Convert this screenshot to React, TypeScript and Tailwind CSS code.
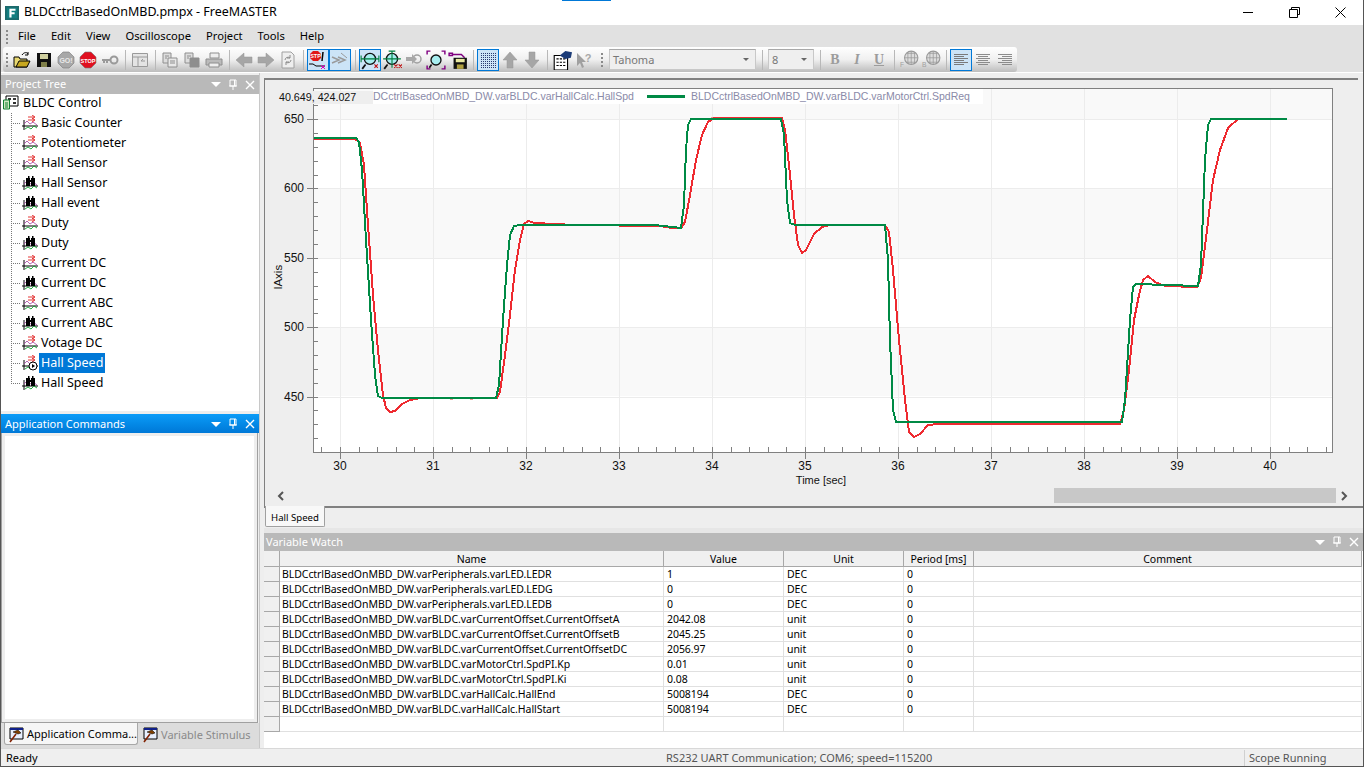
import React from "react";

const ui = "font-['Noto_Sans','Open_Sans',sans-serif]";

type IconProps = { children: React.ReactNode; size?: number };
const Ico = ({ children, size = 18 }: IconProps) => (
  <svg width={size} height={size} viewBox="0 0 18 18" className="block shrink-0">
    {children}
  </svg>
);

const Open = () => (
  <Ico>
    <path d="M1 6h5l1 2h7v8H1z" fill="#e8d870" stroke="#000" />
    <path d="M3 16l3-6h11l-3 6z" fill="#c8a820" stroke="#000" />
    <path d="M9 4c2-3 5-3 6-1M15 1v3h-3" fill="none" stroke="#000" />
  </Ico>
);
const Save = () => (
  <Ico>
    <path d="M2 2h14v14H2z" fill="#111" />
    <path d="M5 3h8v5H5z" fill="#d0d0a0" />
    <path d="M6 11h6v5H6z" fill="#80804a" />
  </Ico>
);
const Octa = ({ fill, label, color, size }: { fill: string; label: string; color: string; size: number }) => (
  <Ico>
    <path d="M6 1h6l5 5v6l-5 5H6l-5-5V6z" fill={fill} stroke="#777" strokeWidth="0.6" />
    <text x="9" y="11.5" textAnchor="middle" fontSize={size} fontWeight="700" fill={color} fontFamily="Liberation Sans">
      {label}
    </text>
  </Ico>
);
const Key = () => (
  <Ico>
    <circle cx="13" cy="9" r="3.5" fill="none" stroke="#9a9a9a" strokeWidth="2" />
    <path d="M1 9h9M3 9v3M6 9v3" stroke="#9a9a9a" strokeWidth="2" fill="none" />
  </Ico>
);
const WinIcon = () => (
  <Ico>
    <path d="M1.5 2.500h15v13h-15zM1.5 6h15M7 6v9.5" fill="#e4e4e4" stroke="#9a9a9a" />
    <path d="M10 10h4M10 10l2-2" stroke="#9a9a9a" fill="none" />
  </Ico>
);
const Copy = ({ alt }: { alt?: boolean }) => (
  <Ico>
    <path d="M2 2h8v10H2z" fill="#ddd" stroke="#8e8e8e" />
    <path d="M7 7h9v9H7z" fill={alt ? "#8e8e8e" : "#e8e8e8"} stroke="#8e8e8e" />
    <path d="M4 5h4M4 7h2M9 10h5M9 12h5" stroke="#8e8e8e" />
  </Ico>
);
const Print = () => (
  <Ico>
    <path d="M5 2h9v5H5z" fill="#eee" stroke="#8e8e8e" />
    <path d="M1 8h16v6H1z" fill="#bbb" stroke="#8e8e8e" />
    <path d="M4 12h10v4H4z" fill="#eee" stroke="#8e8e8e" />
  </Ico>
);
const Arrow = ({ dir }: { dir: "l" | "r" | "u" | "d" }) => {
  const rot = { l: 180, r: 0, u: 270, d: 90 }[dir];
  return (
    <Ico>
      <g transform={`rotate(${rot} 9 9)`}>
        <path d="M1 6h8V2l8 7-8 7v-4H1z" fill="#a6a6a6" stroke="#949494" strokeWidth="0.5" />
      </g>
    </Ico>
  );
};
const Refresh = () => (
  <Ico>
    <path d="M3 1h9l3 3v13H3z" fill="#eee" stroke="#a0a0a0" />
    <path d="M6 9a3 3 0 0 1 5-2M12 9a3 3 0 0 1-5 2M11 4v3H8M7 14v-3h3" fill="none" stroke="#8a8a8a" />
  </Ico>
);
const StpTrig = () => (
  <svg width="20" height="20" viewBox="0 0 20 20" className="block">
    <path d="M5 1h5l3 3v4l-3 3H5L2 8V4z" fill="#e01818" />
    <text x="7.5" y="8" textAnchor="middle" fontSize="5.5" fontWeight="700" fill="#fff" fontFamily="Liberation Sans">
      STP
    </text>
    <path d="M1 14h4l3 2h9" fill="none" stroke="#000" />
    <path d="M15 2l-1 9" stroke="#000" strokeWidth="1.5" />
    <path d="M13 15l4 4M17 15l-4 4" stroke="#e000c0" />
  </svg>
);
const Faded = () => (
  <Ico>
    <path d="M1 6l7 3-7 3M7 6l7 3-7 3" fill="none" stroke="#9a9a9a" strokeWidth="1.5" />
    <path d="M10 2l6 5" stroke="#9a9a9a" />
  </Ico>
);
const Lens = ({ cx = 9, cy = 8, r = 5 }: { cx?: number; cy?: number; r?: number }) => (
  <circle cx={cx} cy={cy} r={r} fill="#a8eef0" stroke="#111" strokeWidth="1.2" />
);
const ZoomX = () => (
  <Ico size={20}>
    <Lens />
    <path d="M1 8h16" stroke="#008040" strokeWidth="1.2" />
    <path d="M1 5v6M17 5v6" stroke="#008040" />
    <path d="M5 13l-3 4" stroke="#111" strokeWidth="1.6" />
    <path d="M13 13l3 3M16 13l-3 3" stroke="#c01010" />
  </Ico>
);
const ZoomXY = () => (
  <Ico size={20}>
    <Lens />
    <path d="M1 8h16M9 1v15M6 1h6" stroke="#008040" />
    <path d="M5 13l-3 4" stroke="#111" strokeWidth="1.6" />
    <path d="M11 13l3 3M14 13l-3 3M15 13l3 3M18 13l-3 3" stroke="#c01010" />
  </Ico>
);
const ZoomBack = () => (
  <Ico>
    <circle cx="12" cy="8" r="4" fill="none" stroke="#a0a0a0" strokeWidth="1.5" />
    <path d="M1 6h6V3l5 5-5 5v-3H1z" fill="#a8a8a8" />
  </Ico>
);
const ZoomAll = () => (
  <Ico size={20}>
    <Lens cx={9} cy={9} r={4.5} />
    <path d="M5 13l-2 3" stroke="#111" strokeWidth="1.5" />
    <path d="M1 4V1h3M14 1h3v3M17 14v3h-3M4 17H1v-3" fill="none" stroke="#800080" strokeWidth="1.3" />
  </Ico>
);
const SaveMove = () => (
  <Ico size={20}>
    <path d="M1 3h3v2H1zM4 4h8l3 3" fill="none" stroke="#800080" strokeWidth="1.3" />
    <path d="M5 7h12v10H5z" fill="#111" />
    <path d="M7 8h8v3H7z" fill="#e8e8a0" />
    <path d="M8 13h6v4H8z" fill="#b0a040" />
  </Ico>
);
const Dots = () => (
  <svg width="16" height="16" viewBox="0 0 16 16" className="block">
    {Array.from({ length: 64 }).map((_, i) => (
      <rect key={i} x={1 + (i % 8) * 2} y={1 + Math.floor(i / 8) * 2} width="1" height="1" fill="#2a3a70" />
    ))}
  </svg>
);
const Props = () => (
  <Ico size={20}>
    <path d="M2 5h12v13H2z" fill="#fff" stroke="#000" />
    <path d="M4 8h8M4 11h8M4 14h8" stroke="#000" strokeDasharray="2 1" />
    <path d="M7 5l5-4 6 1-1 5-5 1z" fill="#1c3c78" />
  </Ico>
);
const Help = () => (
  <Ico>
    <path d="M2 2v13l3-3 2 5 2-1-2-5h4z" fill="#a0a0a0" />
    <text x="13" y="11" textAnchor="middle" fontSize="11" fontWeight="700" fill="#a8a8a8" fontFamily="Liberation Sans">
      ?
    </text>
  </Ico>
);
const Letter = ({ t, cls }: { t: string; cls: string }) => (
  <span className={`text-[14px] leading-none text-[#9c9c9c] font-['Liberation_Serif',serif] font-bold ${cls}`}>{t}</span>
);
const Globe = ({ l }: { l: string }) => (
  <Ico size={20}>
    <circle cx="11" cy="7" r="6" fill="#ddd" stroke="#9a9a9a" />
    <path d="M5 7h12M11 1v12M7 3h8M7 11h8M8 2v10M14 2v10" stroke="#9a9a9a" strokeWidth="0.7" />
    <text x="1" y="15" fontSize="6" fill="#a0a0a0" fontFamily="Liberation Sans">
      {l}
    </text>
  </Ico>
);
const Align = ({ kind }: { kind: "l" | "c" | "r" }) => {
  const widths = [14, 10, 14, 10, 14, 10];
  return (
    <svg width="16" height="14" viewBox="0 0 16 14" className="block">
      {widths.map((w, i) => {
        const x = kind === "l" ? 1 : kind === "c" ? (16 - w) / 2 : 15 - w;
        return <rect key={i} x={x} y={1 + i * 2} width={w} height="1" fill={kind === "l" ? "#7a7a7a" : "#8c8c8c"} />;
      })}
    </svg>
  );
};
const Btn = ({ children, on }: { children?: React.ReactNode; on?: boolean }) => (
  <div
    className={`w-[22px] h-[22px] shrink-0 flex items-center justify-center ${
      on ? "border border-[#0078d7] bg-[#cce4f7]" : ""
    }`}
  >
    {children}
  </div>
);
const Sep = () => (
  <div className="w-[8px] h-[20px] shrink-0 flex justify-center">
    <div className="w-px h-full bg-[#b8b8b8]" />
  </div>
);
const Grip = () => (
  <div className="w-[2px] h-[14px] bg-[repeating-linear-gradient(to_bottom,#8a8a8a_0,#8a8a8a_2px,transparent_2px,transparent_4px)]" />
);
const Combo = ({ text, w }: { text: string; w: string }) => (
  <div className={`${w} h-[21px] shrink-0 bg-[#efefef] border border-[#c8c8c8] border-t-[#a8a8a8] flex items-center justify-between pl-[3px] pr-[6px]`}>
    <span className="pt-[2px] text-[11px] text-[#777]">{text}</span>
    <span className="w-0 h-0 border-x-[3px] border-x-transparent border-t-[3px] border-t-[#666]" />
  </div>
);

const Toolbar = () => (
  <div className="h-[25px] ml-[2px] w-[1014px] rounded-[3px] flex items-center pl-[3px] bg-gradient-to-b from-[#ffffff] via-[#f0f0f0] to-[#bdbdbd]">
    <div className="w-[5px]"><Grip /></div>
    <Btn><Open /></Btn>
    <Btn><Save /></Btn>
    <Btn><Octa fill="#a8a8a8" label="GO!" color="#e8e8e8" size={7} /></Btn>
    <Btn><Octa fill="#e01020" label="STOP" color="#fff" size={5.5} /></Btn>
    <Btn><Key /></Btn>
    <Sep />
    <Btn><WinIcon /></Btn>
    <Sep />
    <Btn><Copy /></Btn>
    <Btn><Copy alt /></Btn>
    <Btn><Print /></Btn>
    <Sep />
    <Btn><Arrow dir="l" /></Btn>
    <Btn><Arrow dir="r" /></Btn>
    <Btn><Refresh /></Btn>
    <Sep />
    <Btn on><StpTrig /></Btn>
    <Btn on><Faded /></Btn>
    <Sep />
    <Btn on><ZoomX /></Btn>
    <Btn><ZoomXY /></Btn>
    <Btn><ZoomBack /></Btn>
    <Btn><ZoomAll /></Btn>
    <Btn><SaveMove /></Btn>
    <Sep />
    <Btn on><Dots /></Btn>
    <Btn><Arrow dir="u" /></Btn>
    <Btn><Arrow dir="d" /></Btn>
    <Sep />
    <Btn><Props /></Btn>
    <Btn><Help /></Btn>
    <div className="w-[14px] flex justify-center"><Grip /></div>
    <Combo text="Tahoma" w="w-[147px]" />
    <div className="w-[12px] flex justify-center"><div className="w-px h-[20px] bg-[#b8b8b8]" /></div>
    <Combo text="8" w="w-[46px]" />
    <div className="w-[2px]" />
    <Sep />
    <Btn><Letter t="B" cls="" /></Btn>
    <Btn><Letter t="I" cls="italic" /></Btn>
    <Btn><Letter t="U" cls="underline" /></Btn>
    <Sep />
    <Btn><Globe l="F" /></Btn>
    <Btn><Globe l="B" /></Btn>
    <Sep />
    <Btn on><Align kind="l" /></Btn>
    <Btn><Align kind="c" /></Btn>
    <Btn><Align kind="r" /></Btn>
  </div>
);

const ScopeIcon = ({ rec, run }: { rec?: boolean; run?: boolean }) => (
  <svg width="18" height="16" viewBox="0 0 18 16" className="block shrink-0">
    <path d="M1 11h16M3 5v10" stroke="#000" fill="none" />
    <path d="M3 9l3-3 3 3 3-2 4 3" stroke="#a040a0" fill="none" strokeWidth="0.8" />
    <path d="M4 14l3-2 3 2 3-3 3 2" stroke="#10a030" fill="none" strokeWidth="0.9" />
    {rec ? (
      <g fill="#000">
        <rect x="5" y="3" width="4" height="8" />
        <rect x="10" y="3" width="4" height="8" />
        <rect x="7" y="1" width="1.5" height="3" />
        <rect x="11" y="1" width="1.5" height="3" />
        <rect x="8" y="5" width="3" height="2" />
      </g>
    ) : (
      <path d="M7 2h6M7 5h6M11 0l3 2-3 2M11 3l3 2-3 2" stroke="#e02020" fill="none" strokeWidth="0.9" />
    )}
    {run && (
      <g>
        <circle cx="12" cy="11" r="4" fill="#fff" stroke="#000" />
        <path d="M11 9l3 2-3 2z" fill="#000" />
      </g>
    )}
  </svg>
);

const tree: { label: string; rec?: boolean; run?: boolean }[] = [
  { label: "Basic Counter" },
  { label: "Potentiometer" },
  { label: "Hall Sensor" },
  { label: "Hall Sensor", rec: true },
  { label: "Hall event", rec: true },
  { label: "Duty" },
  { label: "Duty", rec: true },
  { label: "Current DC" },
  { label: "Current DC", rec: true },
  { label: "Current ABC" },
  { label: "Current ABC", rec: true },
  { label: "Votage DC" },
  { label: "Hall Speed", run: true },
  { label: "Hall Speed", rec: true },
];

const DockButtons = () => (
  <div className="flex items-center gap-[7px] pr-[4px]">
    <span className="w-0 h-0 border-x-[5px] border-x-transparent border-t-[5px] border-t-white" />
    <svg width="10" height="12" viewBox="0 0 10 12" className="block">
      <path d="M2 1h6v6H2zM1 7h8M5 7v4M6.5 1v6" stroke="#fff" fill="none" />
    </svg>
    <svg width="10" height="10" viewBox="0 0 10 10" className="block">
      <path d="M1 1l8 8M9 1l-8 8" stroke="#fff" strokeWidth="1.4" />
    </svg>
  </div>
);

const DockHeader = ({ title, active }: { title: string; active?: boolean }) => (
  <div
    className={`h-[19px] shrink-0 flex items-center justify-between pl-[4px] text-[11px] text-white ${
      active ? "pt-[1px] bg-gradient-to-b from-[#0c9cf8] to-[#0078d7]" : "bg-[#b9b9b9]"
    }`}
  >
    <span>{title}</span>
    <DockButtons />
  </div>
);

const HammerIcon = () => (
  <svg width="18" height="16" viewBox="0 0 18 16" className="block shrink-0">
    <path d="M2 1h13v11H2z" fill="#e8f0ff" stroke="#000" />
    <path d="M2 1h13v2H2z" fill="#10208a" />
    <path d="M5 5l5-2 3 3-3 1z" fill="#804000" stroke="#000" strokeWidth="0.5" />
    <path d="M8 7l-6 8" stroke="#802000" strokeWidth="1.6" />
  </svg>
);

const LeftColumn = () => (
  <div className="w-[258px] shrink-0 flex flex-col pt-[2px]">
    <DockHeader title="Project Tree" />
    <div className="h-[317px] shrink-0 bg-white text-[12.5px] text-black">
      <div className="h-[19px] pb-[1px] flex items-center pl-[2px] gap-[4px]">
        <svg width="16" height="16" viewBox="0 0 16 16" className="block shrink-0">
          <path d="M3 1h12v10H3z" fill="#fff" stroke="#000" />
          <path d="M5 3h3v2H5zM10 3h3v2h-3zM10 7h3v2h-3z" fill="#333" />
          <path d="M0.5 5h6v9h-6z" fill="#cfe8c0" stroke="#108030" />
          <path d="M2 8h3M2 10h3M2 12h3" stroke="#108030" />
        </svg>
        <span>BLDC Control</span>
      </div>
      {tree.map((row, i) => (
        <div key={i} className="h-[20px] flex items-center">
          <svg width="20" height="20" viewBox="0 0 20 20" className="block shrink-0">
            <path d={i === tree.length - 1 ? "M10.5 0v10M10 10.5h10" : "M10.5 0v20M10 10.5h10"} stroke="#777" strokeDasharray="1 1" fill="none" />
          </svg>
          <ScopeIcon rec={row.rec} run={row.run} />
          <span className={`h-[20px] px-[2px] flex items-center ${row.run ? "bg-[#0078d7] text-white" : ""}`}>
            {row.label}
          </span>
        </div>
      ))}
    </div>
    <div className="h-[3px] shrink-0" />
    <DockHeader title="Application Commands" active />
    <div className="h-[290px] shrink-0 border-x border-b border-[#a0a0a0] bg-[#eeeeee] p-[3px] mr-[1px]">
      <div className="w-full h-full bg-white" />
    </div>
    <div className="flex-1 flex bg-[#dcdcdc] text-[11px]">
      <div className="ml-[3px] w-[134px] h-[22px] pt-[2px] bg-[#f6f6f6] border border-t-0 border-[#a8a8a8] rounded-b-[3px] flex items-center gap-[1px] pl-[3px] text-black whitespace-nowrap">
        <HammerIcon />
        <span>Application Comma...</span>
      </div>
      <div className="ml-[4px] h-[22px] pt-[2px] flex items-center gap-[1px] text-[#8a8a8a] whitespace-nowrap">
        <HammerIcon />
        <span>Variable Stimulus</span>
      </div>
    </div>
  </div>
);

const xOf = (t: number) => 340 + (t - 30) * 93;
const yOf = (v: number) => 119 + (650 - v) * 1.388;

const green =
  "313,138 356,138 359,142 362,170 366,240 371,320 375,375 378,396 382,398 496,398 499,385 503,320 507,265 510,235 514,226 520,225 655,225 672,227 681,228 684,205 686,150 688,125 691,119 781,119 784,135 787,200 790,223 795,225 885,225 888,260 890,340 893,410 896,422 1122,422 1125,400 1130,320 1133,287 1136,284 1198,286 1201,265 1205,160 1208,125 1211,119 1287,119";
const red =
  "313,139 355,139 360,143 364,165 368,225 373,295 378,350 383,395 386,408 390,412 395,411 402,404 410,400 420,398 497,398 500,392 505,355 510,315 515,270 520,240 524,224 528,221 535,223 575,225 660,226 672,228 681,228 685,222 690,195 696,160 702,135 708,122 714,118 782,118 785,130 789,165 794,215 798,245 802,253 806,250 814,234 822,227 830,225 885,225 889,232 893,270 899,340 905,400 909,432 914,437 920,434 928,425 938,424 1120,424 1124,410 1129,370 1134,320 1139,295 1143,280 1148,276 1155,282 1165,286 1197,287 1201,278 1207,230 1213,180 1220,150 1228,128 1238,119 1287,119";

const Chart = () => {
  const majorY = [650, 600, 550, 500, 450];
  const minorY: number[] = [];
  for (let v = 670; v >= 410; v -= 10) minorY.push(v);
  const majorX = [30, 31, 32, 33, 34, 35, 36, 37, 38, 39, 40];
  const minorX: number[] = [];
  for (let i = 0; i <= 54; i++) minorX.push(29.8 + i * 0.2);
  return (
    <svg width="1092" height="407" viewBox="265 80 1092 407" className="block" fontFamily="Liberation Sans" fontSize="12">
      <rect x="313" y="88" width="1020" height="364" fill="#fff" />
      <rect x="313" y="88" width="1020" height="31" fill="#f9f9f9" />
      <rect x="313" y="188" width="1020" height="70" fill="#f9f9f9" />
      <rect x="313" y="327" width="1020" height="69" fill="#f9f9f9" />
      {majorY.map((v) => (
        <path key={v} d={`M313 ${Math.round(yOf(v)) + 0.5}H1333`} stroke="#ececec" />
      ))}
      {majorX.map((t) => (
        <path key={t} d={`M${Math.round(xOf(t)) + 0.5} 88V452`} stroke="#ececec" />
      ))}
      <polyline points={red} fill="none" stroke="#ee2a30" strokeWidth="2" shapeRendering="crispEdges" />
      <path d="M711 118h3M722 118h2M732 118h3M742 118h4M956 424h6M1030 424h8M1095 424h4M450 399h3M470 399h3" stroke="#ee2a30" />
      <polyline points={green} fill="none" stroke="#008a45" strokeWidth="2" shapeRendering="crispEdges" />
      <rect x="313.5" y="88.5" width="1019" height="364" fill="none" stroke="#808080" />
      {minorY.map((v) => (
        <path key={v} d={`M313 ${Math.round(yOf(v)) + 0.5}h5`} stroke="#808080" />
      ))}
      {majorY.map((v) => (
        <g key={v}>
          <path d={`M307 ${Math.round(yOf(v)) + 0.5}h6`} stroke="#808080" />
          <text x="304" y={yOf(v) + 4} textAnchor="end" fill="#111">
            {v}
          </text>
        </g>
      ))}
      {minorX.map((t) => (
        <path key={t} d={`M${Math.round(xOf(t)) + 0.5} 447V452`} stroke="#808080" />
      ))}
      {majorX.map((t) => (
        <g key={t}>
          <path d={`M${Math.round(xOf(t)) + 0.5} 452v7`} stroke="#808080" />
          <text x={xOf(t)} y="470" textAnchor="middle" fill="#111">
            {t}
          </text>
        </g>
      ))}
      <text x="821" y="484" textAnchor="middle" fontSize="11" fill="#111">
        Time [sec]
      </text>
      <text transform="translate(282 277) rotate(-90)" textAnchor="middle" fontSize="11.5" fill="#111">
        lAxis
      </text>
      <rect x="276" y="91" width="97" height="13" fill="#eeeeee" />
      <rect x="373" y="89" width="610" height="15" fill="#fff" />
      <text x="279" y="101" fontSize="10.7" fill="#111">
        40.649, 424.027
      </text>
      <text x="373" y="100" fontSize="10.5" fill="#8a8aa8">
        DCctrlBasedOnMBD_DW.varBLDC.varHallCalc.HallSpd
      </text>
      <rect x="647" y="95" width="38" height="3" fill="#008a45" />
      <text x="691" y="100" fontSize="10.5" fill="#8a8aa8">
        BLDCctrlBasedOnMBD_DW.varBLDC.varMotorCtrl.SpdReq
      </text>
    </svg>
  );
};

const rows = [
  ["BLDCctrlBasedOnMBD_DW.varPeripherals.varLED.LEDR", "1", "DEC"],
  ["BLDCctrlBasedOnMBD_DW.varPeripherals.varLED.LEDG", "0", "DEC"],
  ["BLDCctrlBasedOnMBD_DW.varPeripherals.varLED.LEDB", "0", "DEC"],
  ["BLDCctrlBasedOnMBD_DW.varBLDC.varCurrentOffset.CurrentOffsetA", "2042.08", "unit"],
  ["BLDCctrlBasedOnMBD_DW.varBLDC.varCurrentOffset.CurrentOffsetB", "2045.25", "unit"],
  ["BLDCctrlBasedOnMBD_DW.varBLDC.varCurrentOffset.CurrentOffsetDC", "2056.97", "unit"],
  ["BLDCctrlBasedOnMBD_DW.varBLDC.varMotorCtrl.SpdPI.Kp", "0.01", "unit"],
  ["BLDCctrlBasedOnMBD_DW.varBLDC.varMotorCtrl.SpdPI.Ki", "0.08", "unit"],
  ["BLDCctrlBasedOnMBD_DW.varBLDC.varHallCalc.HallEnd", "5008194", "DEC"],
  ["BLDCctrlBasedOnMBD_DW.varBLDC.varHallCalc.HallStart", "5008194", "DEC"],
];

const gridCols = "grid grid-cols-[16px_384px_120px_120px_70px_388px]";
const headCell = "h-[16px] pt-[2px] bg-[#f0f0f0] border-r border-b border-[#a8a8a8] flex items-center justify-center";
const cell = "h-[15px] border-r border-b border-[#e0e0e0] flex items-center pl-[3px] whitespace-nowrap overflow-hidden";

const WatchTable = () => (
  <div className="flex-1 text-[10.5px] leading-none tracking-[-0.06px] text-black bg-white">
    <div className={gridCols}>
      <div className={headCell} />
      <div className={headCell}>Name</div>
      <div className={headCell}>Value</div>
      <div className={headCell}>Unit</div>
      <div className={headCell}>Period [ms]</div>
      <div className={headCell}>Comment</div>
    </div>
    {[...rows, ["", "", ""]].map((r, i) => (
      <div key={i} className={gridCols}>
        <div className="h-[15px] bg-[#f0f0f0] border-r border-b border-[#a8a8a8]" />
        <div className="h-[15px] border-r border-b border-[#e0e0e0] flex items-center pl-[2px] whitespace-nowrap overflow-hidden">{r[0]}</div>
        <div className={cell}>{r[1]}</div>
        <div className={cell}>{r[2]}</div>
        <div className={cell}>{r[0] ? "0" : ""}</div>
        <div className={cell} />
      </div>
    ))}
  </div>
);

const RightColumn = () => (
  <div className="flex-1 flex flex-col pl-[4px] border-l border-[#c8c8c8]">
    <div className="h-[435px] shrink-0 pt-[5px] border-b-2 border-[#808080]">
      <div className="h-full mr-[5px] border-t-2 border-l border-[#808080]">
        <Chart />
        <div className="h-[17px] flex items-center justify-between">
          <svg width="30" height="12" viewBox="0 0 30 12" className="block ml-[11px]">
            <path d="M7 2L3 6l4 4" fill="none" stroke="#555" strokeWidth="2" />
          </svg>
          <div className="w-[282px] h-[15px] bg-[#c8c8c8] ml-auto" />
          <svg width="22" height="12" viewBox="0 0 22 12" className="block">
            <path d="M6 2l4 4-4 4" fill="none" stroke="#555" strokeWidth="2" />
          </svg>
        </div>
      </div>
    </div>
    <div className="h-[20px] shrink-0 flex">
      <div className="relative ml-[1px] -mt-[2px] w-[60px] h-[21px] pt-[5px] bg-[#f8f8f8] border-x border-b border-[#a0a0a0] rounded-b-[2px] flex items-center justify-center text-[9.6px] text-black">
        Hall Speed
      </div>
    </div>
    <div className="h-[5px] shrink-0 bg-[#e6e6e6]" />
    <div className="h-[18px] shrink-0 flex items-center justify-between pl-[2px] bg-[#b9b9b9] text-[11px] text-white">
      <span>Variable Watch</span>
      <DockButtons />
    </div>
    <WatchTable />
  </div>
);

export default function App() {
  return (
    <div className={`relative w-[1364px] h-[767px] flex flex-col overflow-hidden bg-[#eeeeee] border-x border-b border-[#555] ${ui}`}>
      <div className="absolute top-0 left-[561px] w-[49px] h-[1px] bg-[#0078d7]" />
      <div className="h-[25px] shrink-0 bg-white flex items-center">
        <svg width="14" height="14" viewBox="0 0 16 16" className="block ml-[4px] shrink-0">
          <rect width="16" height="16" fill="#1c6a6c" />
          <rect x="2" y="2" width="12" height="12" fill="#147e80" />
          <path d="M5 3h7v2.500H7.500V7H11v2.500H7.500V13H5z" fill="#fff" />
        </svg>
        <span className="ml-[5px] text-[12.5px] text-black">BLDCctrlBasedOnMBD.pmpx - FreeMASTER</span>
        <div className="ml-auto flex items-center">
          <div className="w-[46px] flex justify-center">
            <svg width="11" height="11" viewBox="0 0 11 11" className="block"><path d="M0 5.500h10" stroke="#000" /></svg>
          </div>
          <div className="w-[46px] flex justify-center">
            <svg width="11" height="11" viewBox="0 0 11 11" className="block"><path d="M2.500 2.500V.5h8v7h-2M.5 2.500h8v8h-8z" stroke="#000" fill="none" /></svg>
          </div>
          <div className="w-[46px] flex justify-center">
            <svg width="11" height="11" viewBox="0 0 11 11" className="block"><path d="M.5.500l10 10M10.500.5l-10 10" stroke="#000" /></svg>
          </div>
        </div>
      </div>
      <div className="h-[48px] shrink-0 bg-[#e1e1e1] border-b border-white">
        <div className="h-[22px] pt-[1px] flex items-center text-[11.2px] text-black pl-[5px]">
          <div className="w-[12px]"><Grip /></div>
          <div className="flex gap-[15px]">
            <span>File</span>
            <span>Edit</span>
            <span>View</span>
            <span>Oscilloscope</span>
            <span>Project</span>
            <span>Tools</span>
            <span>Help</span>
          </div>
        </div>
        <Toolbar />
      </div>
      <div className="h-[675px] shrink-0 flex">
        <LeftColumn />
        <RightColumn />
      </div>
      <div className="flex-1 pt-[1px] flex items-center border-t border-[#d8d8d8] bg-[#efefef] text-[11px] text-[#555]">
        <span className="pl-[5px] text-black w-[665px]">Ready</span>
        <span className="w-[578px]">RS232 UART Communication; COM6; speed=115200</span>
        <span className="pl-[4px] border-l border-[#d0d0d0] h-full flex items-center">Scope Running</span>
      </div>
    </div>
  );
}
